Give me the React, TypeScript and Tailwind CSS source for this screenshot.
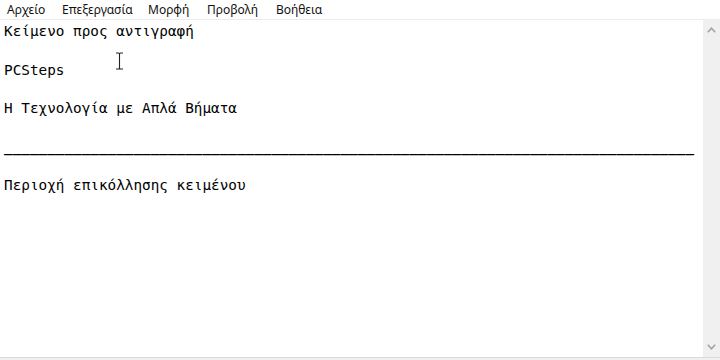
import React from "react";

const menu = [
  { label: "Αρχείο", w: "w-[55px]" },
  { label: "Επεξεργασία", w: "w-[86px]" },
  { label: "Μορφή", w: "w-[59px]" },
  { label: "Προβολή", w: "w-[69px]" },
  { label: "Βοήθεια", w: "w-[60px]" },
];

const lines = [
  "Κείμενο προς αντιγραφή",
  "",
  "PCSteps",
  "",
  "Η Τεχνολογία με Απλά Βήματα",
  "",
  "_".repeat(80),
  "",
  "Περιοχή επικόλλησης κειμένου",
];

export default function App() {
  return (
    <div className="relative w-[720px] h-[360px] bg-white flex flex-col overflow-hidden">
      <div
        className="h-[20px] flex items-center pl-[7px] border-b border-[#ececec] text-[12px] text-[#111]"
        style={{ fontFamily: '"Noto Sans", "Open Sans", sans-serif' }}
      >
        {menu.map((m) => (
          <div key={m.label} className={`${m.w} leading-[20px]`}>
            {m.label}
          </div>
        ))}
      </div>
      <div className="flex-1 flex min-h-0">
        <div
          className="flex-1 pl-[4px] pt-[2px] text-[14.33px] leading-[19.25px] text-black whitespace-pre"
          style={{ fontFamily: '"DejaVu Sans Mono", "Liberation Mono", monospace' }}
        >
          {lines.map((l, i) => (
            <div key={i} className={`h-[19.25px] ${l.startsWith("_") ? "font-bold" : ""}`}>
              {l}
            </div>
          ))}
        </div>
        <div className="w-[17px] bg-[#f0f0f0] flex flex-col justify-between items-center py-[7px]">
          <svg width="9" height="6" viewBox="0 0 9 6">
            <path d="M0.8 5.2 L4.5 1.2 L8.2 5.2" fill="none" stroke="#a3a3a3" strokeWidth="1.6" />
          </svg>
          <svg width="9" height="6" viewBox="0 0 9 6">
            <path d="M0.8 0.8 L4.5 4.8 L8.2 0.8" fill="none" stroke="#a3a3a3" strokeWidth="1.6" />
          </svg>
        </div>
      </div>
      <div className="h-[3px] bg-[#f0f0f0] border-t border-[#dadada]" />
      <svg
        className="absolute left-[115px] top-[52px]"
        width="9"
        height="18"
        viewBox="0 0 9 18"
      >
        <path
          d="M1 1 H3.5 Q4.5 1 4.5 2 V16 Q4.5 17 3.5 17 H1 M8 1 H5.5 Q4.5 1 4.5 2 M4.5 16 Q4.5 17 5.5 17 H8"
          fill="none"
          stroke="#222"
          strokeWidth="1.1"
        />
      </svg>
    </div>
  );
}
